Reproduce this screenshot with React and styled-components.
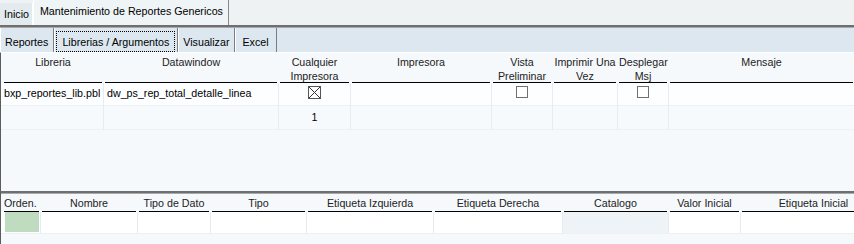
import React from 'react'
import styled, { createGlobalStyle } from 'styled-components'

const GlobalStyle = createGlobalStyle`
  body {
    margin: 0;
    font-family: "Liberation Sans", Arial, sans-serif;
    font-size: 10.7px;
    color: #000;
    background: #f6f9fc;
  }
`

const Page = styled.div`
  width: 854px;
  height: 244px;
  overflow: hidden;
  display: flex;
  flex-direction: column;
`

const TopBar = styled.div`
  height: 25px;
  display: flex;
  align-items: flex-end;
  background: #eef2f3;
  border-bottom: 2px solid #6f6f6f;
`

const TopTab = styled.div`
  height: ${p => (p.$active ? '25px' : '22px')};
  padding: ${p => (p.$active ? '0 5px 0 6px' : '0 3px 0 3px')};
  display: flex;
  align-items: ${p => (p.$active ? 'flex-start' : 'center')};
  line-height: 22px;
  background: ${p => (p.$active ? '#eff4f6' : '#e4ebee')};
  border-left: 1px solid ${p => (p.$active ? '#ffffff' : 'transparent')};
  border-right: 1px solid ${p => (p.$active ? '#8a8a8a' : '#ffffff')};
  box-sizing: border-box;
`

const SubBar = styled.div`
  height: 25px;
  display: flex;
  align-items: stretch;
  background: #dce7f0;
  border-top: 1px solid #a9a9a9;
  box-sizing: border-box;
`

const SubTab = styled.div`
  display: flex;
  align-items: flex-end;
  padding: 0 2px;
  border-right: 1px solid #7c7c7c;
  box-shadow: inset 1px 0 0 #ffffff;
`

const SubLabel = styled.span`
  height: 21px;
  line-height: 20px;
  padding: 0 ${p => p.$pad || 2}px;
  box-sizing: border-box;
  border: 1px ${p => (p.$focus ? 'dotted #000' : 'solid transparent')};
`

const Panel = styled.div`
  height: ${p => p.$h}px;
  flex: ${p => (p.$grow ? 1 : 'none')};
  overflow: hidden;
  background: #f6f9fc;
  border-left: 1px solid #5c5c5c;
  border-top: ${p => (p.$double ? '2px solid #6f6f6f' : '1px solid #ffffff')};
  box-shadow: ${p => (p.$double ? 'inset 0 1px 0 #a9a9a9' : 'none')};
  box-sizing: border-box;
`

const Grid = styled.div`
  display: grid;
  grid-template-columns: ${p => p.$cols};
  width: ${p => p.$w}px;
`

const HeaderCell = styled.div`
  height: ${p => p.$h}px;
  padding: 0 2px 0 ${p => (p.$first ? 3 : 1)}px;
  box-sizing: border-box;
`

const HeaderLabel = styled.div`
  height: 100%;
  box-sizing: border-box;
  border-bottom: 1px solid #000;
  text-align: ${p => (p.$left ? 'left' : 'center')};
  padding-top: ${p => p.$top}px;
  line-height: 14px;
  color: #222;
  white-space: nowrap;
`

const Cell = styled.div`
  height: ${p => p.$h}px;
  line-height: ${p => p.$lh || 20}px;
  padding: 0 ${p => (p.$left ? 3 : 1)}px;
  background: ${p => p.$bg || 'transparent'};
  border-right: 1px solid #e6ecf2;
  border-bottom: 1px solid #edf1f6;
  white-space: nowrap;
  overflow: hidden;
  box-sizing: border-box;
  display: flex;
  justify-content: ${p => (p.$left ? 'flex-start' : 'center')};
`

const Box = styled.span`
  width: 12px;
  height: 12px;
  margin-top: 3px;
  background: #fff;
  border: 1px solid #707070;
  box-sizing: border-box;
  display: block;
`

const Swatch = styled.div`
  margin: 0 0 0 3px;
  width: 35px;
  height: 20px;
  background: #bfdcc0;
`

const CrossBox = () => (
  <svg width="13" height="13" viewBox="0 0 13 13" style={{ marginTop: 3 }}>
    <rect x="0.5" y="0.5" width="12" height="12" fill="#fff" stroke="#555" />
    <path d="M1 1 L12 12 M12 1 L1 12" stroke="#333" strokeWidth="1" />
  </svg>
)

const topCols = [
  ['Libreria', 103],
  ['Datawindow', 175],
  ['Cualquier\nImpresora', 72],
  ['Impresora', 141],
  ['Vista\nPreliminar', 61],
  ['Imprimir Una\nVez', 65],
  ['Desplegar\nMsj', 51],
  ['Mensaje', 186],
]

const bottomCols = [
  ['Orden.', 40],
  ['Nombre', 97],
  ['Tipo de Dato', 73],
  ['Tipo', 96],
  ['Etiqueta Izquierda', 127],
  ['Etiqueta Derecha', 129],
  ['Catalogo', 106],
  ['Valor Inicial', 72],
  ['Etiqueta Inicial', 146],
]

const colsOf = list => list.map(c => c[1] + 'px').join(' ')
const widthOf = list => list.reduce((a, c) => a + c[1], 0)

export default function App() {
  const row1 = [
    <Cell key="a" $h={23} $left $bg="#fdfeff">bxp_reportes_lib.pbl</Cell>,
    <Cell key="b" $h={23} $left $bg="#fdfeff">dw_ps_rep_total_detalle_linea</Cell>,
    <Cell key="c" $h={23} $bg="#fdfeff"><CrossBox /></Cell>,
    <Cell key="d" $h={23} $bg="#fdfeff" />,
    <Cell key="e" $h={23} $bg="#fdfeff"><Box /></Cell>,
    <Cell key="f" $h={23} $bg="#fdfeff" />,
    <Cell key="g" $h={23} $bg="#fdfeff"><Box /></Cell>,
    <Cell key="h" $h={23} $bg="#fdfeff" />,
  ]
  const row2 = topCols.map((c, i) => (
    <Cell key={'r2' + i} $h={24} $lh={22} $bg="#f7fafd">{i === 2 ? '1' : ''}</Cell>
  ))

  return (
    <>
      <GlobalStyle />
      <Page>
        <TopBar>
          <TopTab>Inicio</TopTab>
          <TopTab $active>Mantenimiento de Reportes Genericos</TopTab>
        </TopBar>
        <SubBar>
          <SubTab><SubLabel>Reportes</SubLabel></SubTab>
          <SubTab><SubLabel $focus $pad={5}>Librerias / Argumentos</SubLabel></SubTab>
          <SubTab><SubLabel $pad={2}>Visualizar</SubLabel></SubTab>
          <SubTab><SubLabel $pad={4}>Excel</SubLabel></SubTab>
        </SubBar>

        <Panel $h={139}>
          <Grid $cols={colsOf(topCols)} $w={widthOf(topCols)}>
            {topCols.map(([t], i) => (
              <HeaderCell key={t} $h={30} $first={i === 0}>
                <HeaderLabel $top={2}>
                  {t.split('\n').map(l => <div key={l}>{l}</div>)}
                </HeaderLabel>
              </HeaderCell>
            ))}
            {row1}
            {row2}
          </Grid>
        </Panel>

        <Panel $double $grow>
          <Grid $cols={colsOf(bottomCols)} $w={widthOf(bottomCols)}>
            {bottomCols.map(([t], i) => (
              <HeaderCell key={t} $h={19} $first={i === 0}>
                <HeaderLabel $top={3} $left={i === 0}>{t}</HeaderLabel>
              </HeaderCell>
            ))}
            {bottomCols.map(([t], i) => (
              <Cell key={'b' + t} $h={22} $bg={i === 6 ? '#eef3f8' : '#ffffff'}>
                {i === 0 ? <Swatch /> : null}
              </Cell>
            ))}
          </Grid>
        </Panel>
      </Page>
    </>
  )
}
